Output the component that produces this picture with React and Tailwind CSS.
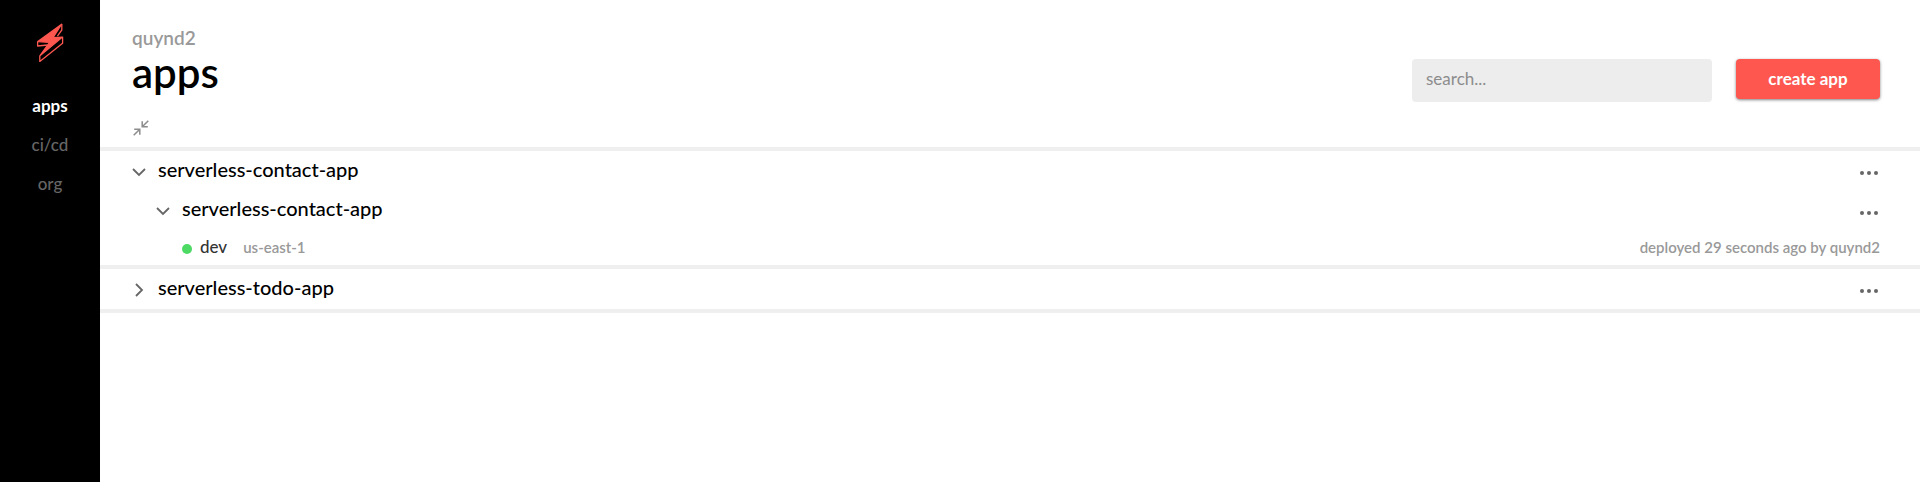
const navItems = [
  { label: "apps", active: true },
  { label: "ci/cd", active: false },
  { label: "org", active: false },
];

function Logo() {
  return (
    <svg viewBox="0 0 28 42" className="h-[42px] w-7" role="img" aria-label="Home">
      <g stroke="#fd5750" strokeWidth="1.3" strokeLinejoin="round">
        <path fill="#fd5750" d="M25.6 2.2 1.8 19.6 13.6 20.4 4.2 33.4 26.2 15.2 17 15.6Z" />
        <path fill="none" d="M25.8 2v6l-4.4 6.2M1.6 19.6v4.4l10-1M3.8 33.4V39.4L26.6 21.2v-6.4" />
      </g>
    </svg>
  );
}

function Chevron({ open }) {
  return (
    <svg viewBox="0 0 14 14" className="h-3.5 w-3.5" fill="none" stroke="#666" strokeWidth="1.8" aria-hidden="true">
      <path d={open ? "M1 4l6 6 6-6" : "M4 1l6 6-6 6"} />
    </svg>
  );
}

function CollapseIcon() {
  return (
    <svg viewBox="0 0 16 16" className="h-4 w-4" fill="none" stroke="#8c8c8c" strokeWidth="1.5" aria-hidden="true">
      <path d="M.7 15.3 6.8 9.2M1.2 9.2h5.6v5.6M15.3.7 9.2 6.8M9.2 1.2v5.6h5.6" />
    </svg>
  );
}

function MoreButton({ name }) {
  return (
    <button type="button" aria-label={"More options for " + name} className="mt-1 mr-0.5 flex h-4 items-center">
      <svg viewBox="0 0 18 4" className="h-1 w-[18px]" fill="#666" aria-hidden="true">
        <circle cx="2" cy="2" r="2" />
        <circle cx="9" cy="2" r="2" />
        <circle cx="16" cy="2" r="2" />
      </svg>
    </button>
  );
}

function Row({ name, open, nested }) {
  return (
    <div className={"flex h-10 items-center justify-between pr-10 " + (nested ? "pl-14" : "pl-8")}>
      <button
        type="button"
        aria-expanded={open}
        className={"flex items-center gap-3 text-xl leading-6 font-medium text-black " + (nested ? "pb-1.5" : "pb-1")}
      >
        <span className="mt-1.5">
          <Chevron open={open} />
        </span>
        {name}
      </button>
      <MoreButton name={name} />
    </div>
  );
}

export default function App() {
  return (
    <div className="flex min-h-screen bg-white font-['Lato','Open_Sans',sans-serif]">
      <nav className="flex w-25 shrink-0 flex-col items-center bg-black pt-[22px]">
        <a href="#home">
          <Logo />
        </a>
        <ul className="mt-[22px] text-center text-[17px]">
          {navItems.map((item) => (
            <li key={item.label} className="flex h-[39px] items-center justify-center">
              <a href={"#" + item.label} className={item.active ? "font-bold text-white" : "font-medium text-[#666]"}>
                {item.label}
              </a>
            </li>
          ))}
        </ul>
      </nav>

      <main className="min-w-0 flex-1">
        <header className="px-8 pt-[26px] pr-10">
          <div className="flex items-end justify-between">
            <div className="pb-2">
              <p className="text-[19px] leading-6 font-semibold text-[#999]">quynd2</p>
              <h1 className="text-[42px] leading-11 font-semibold text-black">apps</h1>
            </div>
            <div className="flex items-start gap-6">
              <input
                type="search"
                aria-label="Search apps"
                placeholder="search..."
                className="h-[43px] w-75 rounded bg-[#ededed] px-3.5 pb-1 text-[17px] text-black outline-none placeholder:text-[#8c8c8c]"
              />
              <button
                type="button"
                className="h-10 w-36 rounded bg-[#fd5750] text-[17px] font-bold text-white shadow-[0_1px_3px_rgba(0,0,0,0.5)]"
              >
                create app
              </button>
            </div>
          </div>
          <button type="button" aria-label="Collapse all" className="mt-[18px] mb-[11px] ml-px block">
            <CollapseIcon />
          </button>
        </header>

        <section className="border-y-4 border-[#efefef]">
          <Row name="serverless-contact-app" open />
          <Row name="serverless-contact-app" open nested />
          <div className="flex h-[34px] items-center justify-between pr-10 pb-0.5 pl-[82px]">
            <div className="flex items-center">
              <span className="mt-1 mr-2 h-2.5 w-2.5 rounded-full bg-[#4cd964]" />
              <span className="mr-4 text-[17px] font-medium text-[#333]">dev</span>
              <span className="text-[15px] font-semibold text-[#999]">us-east-1</span>
            </div>
            <span className="text-[15px] font-semibold text-[#999]">deployed 29 seconds ago by quynd2</span>
          </div>
        </section>
        <section className="border-b-4 border-[#efefef]">
          <Row name="serverless-todo-app" open={false} />
        </section>
      </main>
    </div>
  );
}
